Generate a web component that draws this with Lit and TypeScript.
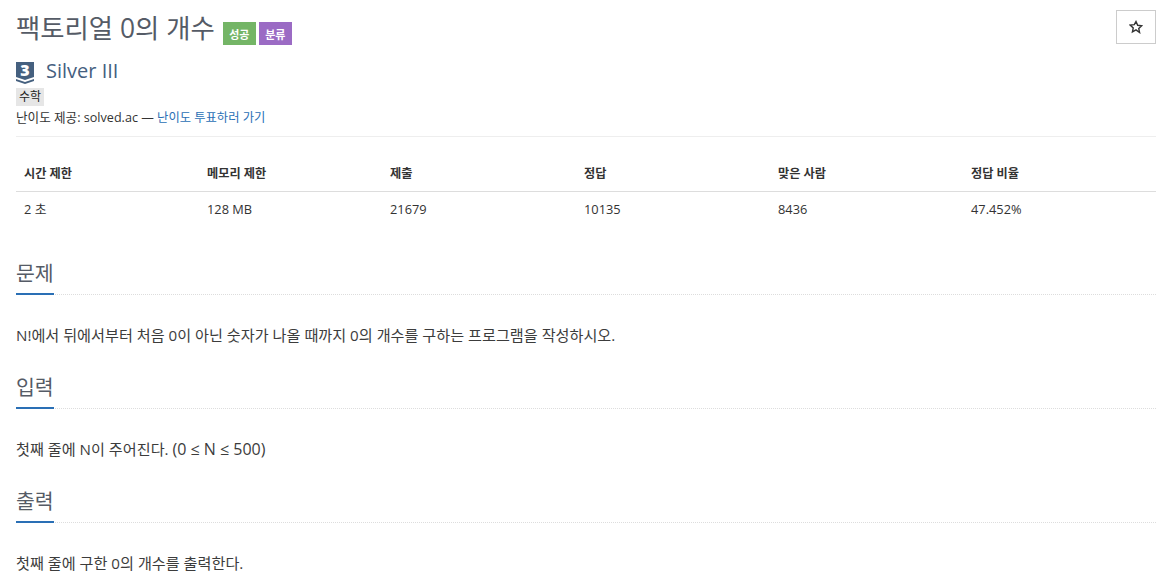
import { LitElement, html, css } from "lit";
import { customElement } from "lit/decorators.js";

@customElement("app-root")
export class AppRoot extends LitElement {
  static styles = css`
    :host { display: block; width: 1170px; height: 585px; overflow: hidden; background: #fff; color: #333; font-family: "Open Sans", "Noto Sans CJK KR", sans-serif; box-sizing: border-box; }
    .page { padding: 0 14px 0 16px; }
    .top { display: flex; align-items: flex-start; justify-content: space-between; height: 56px; }
    .title { display: flex; align-items: flex-start; padding-top: 10px; }
    h1 { margin: 0; font-size: 26.4px; line-height: 36px; font-weight: 400; color: #555b66; }
    .badges { display: flex; gap: 3px; margin: 12px 0 0 8px; }
    .badge { width: 33px; height: 23px; display: flex; align-items: center; justify-content: center; color: #fff; font-size: 11px; font-weight: 700; }
    .ok { background: #74b566; }
    .cat { background: #9b6bc4; }
    .star { height: 32px; margin: 10px 0 0; border: 1px solid #ccc; display: flex; align-items: center; justify-content: center; box-sizing: content-box; width: 38px; }
    .tier { display: flex; align-items: center; gap: 12px; height: 32px; padding-bottom: 2px; box-sizing: border-box; }
    .shield { position: relative; width: 18px; height: 22px; margin-top: 3px; }
    .shield svg { display: block; }
    .digit { position: absolute; left: 0; top: 0; width: 18px; height: 18px; line-height: 17px; text-align: center; font-size: 16px; font-weight: 800; color: #fff; }
    .name { font-size: 20px; color: #45607f; line-height: 28px; }
    .tagrow { height: 20px; }
    .tag { display: block; width: fit-content; background: #e6e6e6; font-size: 12px; line-height: 18px; height: 18px; padding: 0 3px; color: #222; }
    .src { font-size: 12.6px; line-height: 20px; color: #333; height: 20px; }
    .src a { color: #2a6fb5; text-decoration: none; font-size: 12.3px; }
    .rule { height: 1px; background: #eee; margin-top: 8px; width: 1140px; }
    .table { display: grid; grid-template-columns: 183px 183px 194px 194px 193px 193px; width: 1140px; margin-top: 18px; font-size: 12.8px; }
    .th { font-weight: 700; font-size: 12.2px; height: 37px; line-height: 38px; padding-left: 8px; border-bottom: 1px solid #ddd; color: #333; box-sizing: border-box; }
    .td { height: 36px; line-height: 34px; padding-left: 8px; color: #333; }
    section { width: 1140px; }
    .h { height: 40px; border-bottom: 1px dotted #ddd; position: relative; box-sizing: border-box; font-size: 20.5px; line-height: 36px; color: #555b66; }
    .h::after { content: ""; position: absolute; left: 0; bottom: -1px; width: 38px; height: 2px; background: #2a6fb5; }
    .h span { display: block; }
    p { margin: 0; font-size: 15.15px; line-height: 22px; color: #3c3c3c; }
    .latin { font-size: 16px; }
    .s1 { margin-top: 27px; }
    .s1 p { margin-top: 29px; }
    .s2 { margin-top: 23px; }
    .s2 p { margin-top: 29px; }
    .s3 { margin-top: 23px; }
    .s3 p { margin-top: 29px; }
  `;

  render() {
    const heads = ["시간 제한", "메모리 제한", "제출", "정답", "맞은 사람", "정답 비율"];
    const cells = ["2 초", "128 MB", "21679", "10135", "8436", "47.452%"];
    return html`<div class="page">
      <div class="top">
        <div class="title">
          <h1>팩토리얼 0의 개수</h1>
          <div class="badges"><div class="badge ok">성공</div><div class="badge cat">분류</div></div>
        </div>
        <div class="star">
          <svg width="14" height="14" viewBox="0 0 24 24" fill="none" stroke="#333" stroke-width="2.4" stroke-linejoin="miter"><path d="M12 2.6l2.9 6.4 6.9.8-5.1 4.7 1.4 6.9L12 17l-6.1 3.4 1.4-6.9-5.1-4.7 6.9-.8z"/></svg>
        </div>
      </div>
      <div class="tier">
        <div class="shield">
          <svg width="18" height="22" viewBox="0 0 18 22">
            <path d="M0 0h18v15l-9 3-9-3z" fill="#45607f"/>
            <path d="M0 17l9 3 9-3v2l-9 3-9-3z" fill="#45607f"/>
          </svg>
          <span class="digit">3</span>
        </div>
        <span class="name">Silver III</span>
      </div>
      <div class="tagrow"><span class="tag">수학</span></div>
      <div class="src">난이도 제공: solved.ac — <a>난이도 투표하러 가기</a></div>
      <div class="rule"></div>
      <div class="table">
        ${heads.map((h) => html`<div class="th">${h}</div>`)}
        ${cells.map((c) => html`<div class="td">${c}</div>`)}
      </div>
      <section class="s1"><div class="h"><span>문제</span></div>
        <p>N!에서 뒤에서부터 처음 0이 아닌 숫자가 나올 때까지 0의 개수를 구하는 프로그램을 작성하시오.</p></section>
      <section class="s2"><div class="h"><span>입력</span></div>
        <p>첫째 줄에 N이 주어진다. <span class="latin">(0 ≤ N ≤ 500)</span></p></section>
      <section class="s3"><div class="h"><span>출력</span></div>
        <p>첫째 줄에 구한 0의 개수를 출력한다.</p></section>
    </div>`;
  }
}
